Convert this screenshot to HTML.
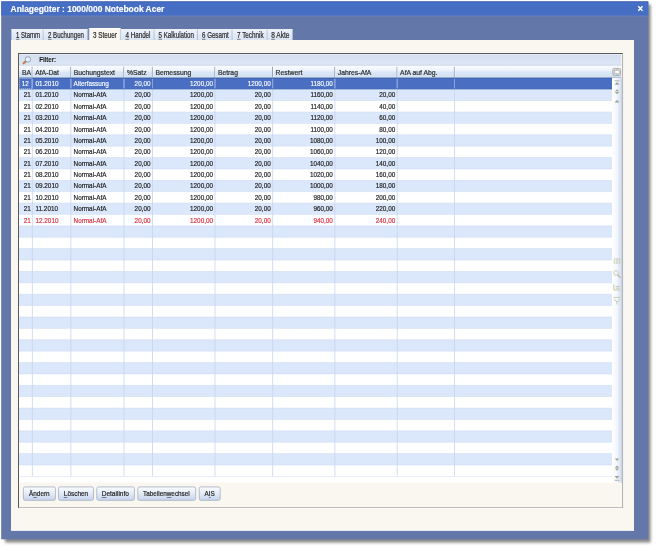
<!DOCTYPE html><html><head><meta charset="utf-8"><style>html,body{margin:0;padding:0;background:#fff;overflow:hidden}svg{display:block;filter:blur(0.3px)}text{font-family:"Liberation Sans",sans-serif}</style></head><body>
<svg width="656" height="548" viewBox="0 0 656 548">
<defs><linearGradient id="gTab" x1="0" y1="0" x2="0" y2="1"><stop offset="0" stop-color="#eef3fa"/><stop offset="1" stop-color="#d9e3f2"/></linearGradient><linearGradient id="gHdr" x1="0" y1="0" x2="0" y2="1"><stop offset="0" stop-color="#fbfdff"/><stop offset="0.38" stop-color="#eef4fc"/><stop offset="0.55" stop-color="#d9e6f7"/><stop offset="1" stop-color="#d2e0f4"/></linearGradient><linearGradient id="gFil" x1="0" y1="0" x2="0" y2="1"><stop offset="0" stop-color="#d3deef"/><stop offset="1" stop-color="#dce6f6"/></linearGradient><linearGradient id="gNav" x1="0" y1="0" x2="1" y2="0"><stop offset="0" stop-color="#ffffff"/><stop offset="0.5" stop-color="#f3f6fc"/><stop offset="1" stop-color="#cdd9ef"/></linearGradient><linearGradient id="gBtn" x1="0" y1="0" x2="0" y2="1"><stop offset="0" stop-color="#f9fbfe"/><stop offset="0.4" stop-color="#e9eff9"/><stop offset="1" stop-color="#c6d4ee"/></linearGradient><filter id="sh" x="-5%" y="-5%" width="110%" height="110%"><feGaussianBlur stdDeviation="1.8"/></filter></defs>
<rect x="5" y="4.5" width="645.6" height="538" fill="#000" opacity="0.48" filter="url(#sh)"/>
<rect x="1.2" y="1.5" width="647.1" height="537.8" fill="#6377a8"/>
<rect x="1.2" y="1.5" width="647.1" height="14.3" fill="#476ec5"/>
<rect x="1.5" y="15.6" width="646.8" height="0.8" fill="#7a8fc0" opacity="0.6"/>
<rect x="1.5" y="1.5" width="646.8" height="0.9" fill="#3d5fae" opacity="0.7"/>
<text x="0" y="12.00" font-size="8.4" fill="#ffffff" stroke="#ffffff" stroke-width="0.15" font-weight="bold" transform="translate(10.60,0) scale(1.0048,1)">Anlagegüter : 1000/000 Notebook Acer</text>
<path d="M638.3 6.3 L642.5 10.8 M642.5 6.3 L638.3 10.8" stroke="#fff" stroke-width="1.4"/>
<rect x="11" y="40" width="622.8" height="490.6" fill="#f9f7f0"/>
<rect x="633" y="40" width="0.8" height="490.6" fill="#ffffff"/>
<rect x="11" y="529.8" width="622.8" height="0.8" fill="#ffffff"/>
<rect x="11.4" y="29.2" width="32.0" height="10.8" fill="url(#gTab)"/>
<rect x="11.4" y="29.2" width="32.0" height="0.8" fill="#f4f7fb"/>
<rect x="42.699999999999996" y="29.6" width="0.7" height="10.4" fill="#b0bcd0"/>
<text x="0" y="38.00" font-size="8.4" fill="#2a2a2a" stroke="#2a2a2a" stroke-width="0.2" transform="translate(16.00,0) scale(0.7141,1)">1 Stamm</text>
<rect x="16" y="38.9" width="3.34" height="0.6" fill="#444"/>
<rect x="43.4" y="29.2" width="44.199999999999996" height="10.8" fill="url(#gTab)"/>
<rect x="43.4" y="29.2" width="44.199999999999996" height="0.8" fill="#f4f7fb"/>
<rect x="86.89999999999999" y="29.6" width="0.7" height="10.4" fill="#b0bcd0"/>
<text x="0" y="38.00" font-size="8.4" fill="#2a2a2a" stroke="#2a2a2a" stroke-width="0.2" transform="translate(48.00,0) scale(0.7271,1)">2 Buchungen</text>
<rect x="48" y="38.9" width="3.40" height="0.6" fill="#444"/>
<rect x="88.9" y="28" width="31.69999999999999" height="12.5" fill="#f9f7f0"/>
<rect x="88.9" y="28" width="31.69999999999999" height="0.8" fill="#ffffff"/>
<rect x="88.9" y="28" width="0.7" height="12" fill="#c9d2e2"/>
<rect x="119.89999999999999" y="28" width="0.7" height="12" fill="#c9d2e2"/>
<text x="0" y="37.70" font-size="8.4" fill="#2a2a2a" stroke="#2a2a2a" stroke-width="0.2" transform="translate(93.00,0) scale(0.7558,1)">3 Steuer</text>
<rect x="121" y="29.2" width="33.30000000000001" height="10.8" fill="url(#gTab)"/>
<rect x="121" y="29.2" width="33.30000000000001" height="0.8" fill="#f4f7fb"/>
<rect x="153.60000000000002" y="29.6" width="0.7" height="10.4" fill="#b0bcd0"/>
<text x="0" y="38.00" font-size="8.4" fill="#2a2a2a" stroke="#2a2a2a" stroke-width="0.2" transform="translate(125.50,0) scale(0.7435,1)">4 Handel</text>
<rect x="125.5" y="38.9" width="3.47" height="0.6" fill="#444"/>
<rect x="154.3" y="29.2" width="43.5" height="10.8" fill="url(#gTab)"/>
<rect x="154.3" y="29.2" width="43.5" height="0.8" fill="#f4f7fb"/>
<rect x="197.10000000000002" y="29.6" width="0.7" height="10.4" fill="#b0bcd0"/>
<text x="0" y="38.00" font-size="8.4" fill="#2a2a2a" stroke="#2a2a2a" stroke-width="0.2" transform="translate(158.50,0) scale(0.7381,1)">5 Kalkulation</text>
<rect x="158.5" y="38.9" width="3.45" height="0.6" fill="#444"/>
<rect x="198" y="29.2" width="34.30000000000001" height="10.8" fill="url(#gTab)"/>
<rect x="198" y="29.2" width="34.30000000000001" height="0.8" fill="#f4f7fb"/>
<rect x="231.60000000000002" y="29.6" width="0.7" height="10.4" fill="#b0bcd0"/>
<text x="0" y="38.00" font-size="8.4" fill="#2a2a2a" stroke="#2a2a2a" stroke-width="0.2" transform="translate(202.00,0) scale(0.7360,1)">6 Gesamt</text>
<rect x="202" y="38.9" width="3.44" height="0.6" fill="#444"/>
<rect x="232.3" y="29.2" width="35.099999999999966" height="10.8" fill="url(#gTab)"/>
<rect x="232.3" y="29.2" width="35.099999999999966" height="0.8" fill="#f4f7fb"/>
<rect x="266.7" y="29.6" width="0.7" height="10.4" fill="#b0bcd0"/>
<text x="0" y="38.00" font-size="8.4" fill="#2a2a2a" stroke="#2a2a2a" stroke-width="0.2" transform="translate(237.00,0) scale(0.7528,1)">7 Technik</text>
<rect x="237" y="38.9" width="3.52" height="0.6" fill="#444"/>
<rect x="267.4" y="29.2" width="25.200000000000045" height="10.8" fill="url(#gTab)"/>
<rect x="267.4" y="29.2" width="25.200000000000045" height="0.8" fill="#f4f7fb"/>
<rect x="291.90000000000003" y="29.6" width="0.7" height="10.4" fill="#b0bcd0"/>
<text x="0" y="38.00" font-size="8.4" fill="#2a2a2a" stroke="#2a2a2a" stroke-width="0.2" transform="translate(271.20,0) scale(0.7837,1)">8 Akte</text>
<rect x="271.2" y="38.9" width="3.66" height="0.6" fill="#444"/>
<rect x="18.5" y="53.5" width="604.1" height="454.2" fill="none" stroke="#a9a9a9" stroke-width="0.9"/>
<rect x="19.2" y="508" width="604" height="0.7" fill="#ffffff"/>
<rect x="18.1" y="53.1" width="604.5" height="0.9" fill="#505050"/>
<rect x="18.1" y="53.1" width="0.9" height="454.6" fill="#505050"/>
<rect x="19" y="54" width="602.2" height="11.5" fill="url(#gFil)"/>
<rect x="19" y="54" width="602.2" height="0.8" fill="#e6edf8"/>
<rect x="19" y="64.9" width="602.2" height="0.8" fill="#b9c5da"/>
<circle cx="27.9" cy="59.4" r="2.7" fill="#e4f3fc" stroke="#8a98a8" stroke-width="0.9"/>
<path d="M25.4 61.8 L23.6 63.3" stroke="#c4784e" stroke-width="2.1" stroke-linecap="round"/>
<text x="0" y="61.90" font-size="7.6" fill="#1e1e1e" stroke="#1e1e1e" stroke-width="0.1" font-weight="bold" transform="translate(39.20,0) scale(0.8053,1)">Filter:</text>
<rect x="19" y="65.6" width="602.2" height="12.300000000000011" fill="url(#gHdr)"/>
<rect x="31.700000000000003" y="66.8" width="0.9" height="10.100000000000012" fill="#8f9cb0"/>
<rect x="32.6" y="66.8" width="0.6" height="10.100000000000012" fill="#ffffff" opacity="0.8"/>
<rect x="70.3" y="66.8" width="0.9" height="10.100000000000012" fill="#8f9cb0"/>
<rect x="71.2" y="66.8" width="0.6" height="10.100000000000012" fill="#ffffff" opacity="0.8"/>
<rect x="123.4" y="66.8" width="0.9" height="10.100000000000012" fill="#8f9cb0"/>
<rect x="124.30000000000001" y="66.8" width="0.6" height="10.100000000000012" fill="#ffffff" opacity="0.8"/>
<rect x="151.9" y="66.8" width="0.9" height="10.100000000000012" fill="#8f9cb0"/>
<rect x="152.8" y="66.8" width="0.6" height="10.100000000000012" fill="#ffffff" opacity="0.8"/>
<rect x="214.4" y="66.8" width="0.9" height="10.100000000000012" fill="#8f9cb0"/>
<rect x="215.3" y="66.8" width="0.6" height="10.100000000000012" fill="#ffffff" opacity="0.8"/>
<rect x="272.1" y="66.8" width="0.9" height="10.100000000000012" fill="#8f9cb0"/>
<rect x="273.0" y="66.8" width="0.6" height="10.100000000000012" fill="#ffffff" opacity="0.8"/>
<rect x="334.3" y="66.8" width="0.9" height="10.100000000000012" fill="#8f9cb0"/>
<rect x="335.2" y="66.8" width="0.6" height="10.100000000000012" fill="#ffffff" opacity="0.8"/>
<rect x="396.6" y="66.8" width="0.9" height="10.100000000000012" fill="#8f9cb0"/>
<rect x="397.5" y="66.8" width="0.6" height="10.100000000000012" fill="#ffffff" opacity="0.8"/>
<rect x="453.9" y="66.8" width="0.9" height="10.100000000000012" fill="#8f9cb0"/>
<rect x="454.79999999999995" y="66.8" width="0.6" height="10.100000000000012" fill="#ffffff" opacity="0.8"/>
<rect x="19" y="77.0" width="602.2" height="0.9" fill="#aab6c9"/>
<text x="0" y="74.80" font-size="7.6" fill="#2a2a2a" stroke="#2a2a2a" stroke-width="0.2" transform="translate(21.90,0) scale(0.8947,1)">BA</text>
<text x="0" y="74.80" font-size="7.6" fill="#2a2a2a" stroke="#2a2a2a" stroke-width="0.2" transform="translate(35.20,0) scale(0.8947,1)">AfA-Dat</text>
<text x="0" y="74.80" font-size="7.6" fill="#2a2a2a" stroke="#2a2a2a" stroke-width="0.2" transform="translate(73.80,0) scale(0.8947,1)">Buchungstext</text>
<text x="0" y="74.80" font-size="7.6" fill="#2a2a2a" stroke="#2a2a2a" stroke-width="0.2" transform="translate(126.90,0) scale(0.8947,1)">%Satz</text>
<text x="0" y="74.80" font-size="7.6" fill="#2a2a2a" stroke="#2a2a2a" stroke-width="0.2" transform="translate(155.40,0) scale(0.8947,1)">Bemessung</text>
<text x="0" y="74.80" font-size="7.6" fill="#2a2a2a" stroke="#2a2a2a" stroke-width="0.2" transform="translate(217.90,0) scale(0.8947,1)">Betrag</text>
<text x="0" y="74.80" font-size="7.6" fill="#2a2a2a" stroke="#2a2a2a" stroke-width="0.2" transform="translate(275.60,0) scale(0.8947,1)">Restwert</text>
<text x="0" y="74.80" font-size="7.6" fill="#2a2a2a" stroke="#2a2a2a" stroke-width="0.2" transform="translate(337.80,0) scale(0.8947,1)">Jahres-AfA</text>
<text x="0" y="74.80" font-size="7.6" fill="#2a2a2a" stroke="#2a2a2a" stroke-width="0.2" transform="translate(400.10,0) scale(0.8947,1)">AfA auf Abg.</text>
<rect x="19" y="476" width="593" height="6.5" fill="#ffffff"/>
<rect x="19" y="77.90" width="593" height="11.387" fill="#4a6fc2"/>
<rect x="19" y="89.29" width="593" height="11.387" fill="#dbe7fa"/>
<rect x="19" y="100.67" width="593" height="11.387" fill="#ffffff"/>
<rect x="19" y="112.06" width="593" height="11.387" fill="#dbe7fa"/>
<rect x="19" y="123.45" width="593" height="11.387" fill="#ffffff"/>
<rect x="19" y="134.84" width="593" height="11.387" fill="#dbe7fa"/>
<rect x="19" y="146.22" width="593" height="11.387" fill="#ffffff"/>
<rect x="19" y="157.61" width="593" height="11.387" fill="#dbe7fa"/>
<rect x="19" y="169.00" width="593" height="11.387" fill="#ffffff"/>
<rect x="19" y="180.38" width="593" height="11.387" fill="#dbe7fa"/>
<rect x="19" y="191.77" width="593" height="11.387" fill="#ffffff"/>
<rect x="19" y="203.16" width="593" height="11.387" fill="#dbe7fa"/>
<rect x="19" y="214.54" width="593" height="11.387" fill="#ffffff"/>
<rect x="19" y="225.93" width="593" height="11.387" fill="#dbe7fa"/>
<rect x="19" y="237.32" width="593" height="11.387" fill="#ffffff"/>
<rect x="19" y="248.71" width="593" height="11.387" fill="#dbe7fa"/>
<rect x="19" y="260.09" width="593" height="11.387" fill="#ffffff"/>
<rect x="19" y="271.48" width="593" height="11.387" fill="#dbe7fa"/>
<rect x="19" y="282.87" width="593" height="11.387" fill="#ffffff"/>
<rect x="19" y="294.25" width="593" height="11.387" fill="#dbe7fa"/>
<rect x="19" y="305.64" width="593" height="11.387" fill="#ffffff"/>
<rect x="19" y="317.03" width="593" height="11.387" fill="#dbe7fa"/>
<rect x="19" y="328.41" width="593" height="11.387" fill="#ffffff"/>
<rect x="19" y="339.80" width="593" height="11.387" fill="#dbe7fa"/>
<rect x="19" y="351.19" width="593" height="11.387" fill="#ffffff"/>
<rect x="19" y="362.58" width="593" height="11.387" fill="#dbe7fa"/>
<rect x="19" y="373.96" width="593" height="11.387" fill="#ffffff"/>
<rect x="19" y="385.35" width="593" height="11.387" fill="#dbe7fa"/>
<rect x="19" y="396.74" width="593" height="11.387" fill="#ffffff"/>
<rect x="19" y="408.12" width="593" height="11.387" fill="#dbe7fa"/>
<rect x="19" y="419.51" width="593" height="11.387" fill="#ffffff"/>
<rect x="19" y="430.90" width="593" height="11.387" fill="#dbe7fa"/>
<rect x="19" y="442.28" width="593" height="11.387" fill="#ffffff"/>
<rect x="19" y="453.67" width="593" height="11.387" fill="#dbe7fa"/>
<rect x="19" y="465.06" width="593" height="11.387" fill="#ffffff"/>
<rect x="19" y="88.89" width="593" height="0.7" fill="#c6d6ef" opacity="0.6"/>
<rect x="19" y="100.27" width="593" height="0.7" fill="#c6d6ef" opacity="0.6"/>
<rect x="19" y="111.66" width="593" height="0.7" fill="#c6d6ef" opacity="0.6"/>
<rect x="19" y="123.05" width="593" height="0.7" fill="#c6d6ef" opacity="0.6"/>
<rect x="19" y="134.44" width="593" height="0.7" fill="#c6d6ef" opacity="0.6"/>
<rect x="19" y="145.82" width="593" height="0.7" fill="#c6d6ef" opacity="0.6"/>
<rect x="19" y="157.21" width="593" height="0.7" fill="#c6d6ef" opacity="0.6"/>
<rect x="19" y="168.60" width="593" height="0.7" fill="#c6d6ef" opacity="0.6"/>
<rect x="19" y="179.98" width="593" height="0.7" fill="#c6d6ef" opacity="0.6"/>
<rect x="19" y="191.37" width="593" height="0.7" fill="#c6d6ef" opacity="0.6"/>
<rect x="19" y="202.76" width="593" height="0.7" fill="#c6d6ef" opacity="0.6"/>
<rect x="19" y="214.14" width="593" height="0.7" fill="#c6d6ef" opacity="0.6"/>
<rect x="19" y="225.53" width="593" height="0.7" fill="#c6d6ef" opacity="0.6"/>
<rect x="19" y="236.92" width="593" height="0.7" fill="#c6d6ef" opacity="0.6"/>
<rect x="19" y="248.31" width="593" height="0.7" fill="#c6d6ef" opacity="0.6"/>
<rect x="19" y="259.69" width="593" height="0.7" fill="#c6d6ef" opacity="0.6"/>
<rect x="19" y="271.08" width="593" height="0.7" fill="#c6d6ef" opacity="0.6"/>
<rect x="19" y="282.47" width="593" height="0.7" fill="#c6d6ef" opacity="0.6"/>
<rect x="19" y="293.85" width="593" height="0.7" fill="#c6d6ef" opacity="0.6"/>
<rect x="19" y="305.24" width="593" height="0.7" fill="#c6d6ef" opacity="0.6"/>
<rect x="19" y="316.63" width="593" height="0.7" fill="#c6d6ef" opacity="0.6"/>
<rect x="19" y="328.01" width="593" height="0.7" fill="#c6d6ef" opacity="0.6"/>
<rect x="19" y="339.40" width="593" height="0.7" fill="#c6d6ef" opacity="0.6"/>
<rect x="19" y="350.79" width="593" height="0.7" fill="#c6d6ef" opacity="0.6"/>
<rect x="19" y="362.18" width="593" height="0.7" fill="#c6d6ef" opacity="0.6"/>
<rect x="19" y="373.56" width="593" height="0.7" fill="#c6d6ef" opacity="0.6"/>
<rect x="19" y="384.95" width="593" height="0.7" fill="#c6d6ef" opacity="0.6"/>
<rect x="19" y="396.34" width="593" height="0.7" fill="#c6d6ef" opacity="0.6"/>
<rect x="19" y="407.72" width="593" height="0.7" fill="#c6d6ef" opacity="0.6"/>
<rect x="19" y="419.11" width="593" height="0.7" fill="#c6d6ef" opacity="0.6"/>
<rect x="19" y="430.50" width="593" height="0.7" fill="#c6d6ef" opacity="0.6"/>
<rect x="19" y="441.88" width="593" height="0.7" fill="#c6d6ef" opacity="0.6"/>
<rect x="19" y="453.27" width="593" height="0.7" fill="#c6d6ef" opacity="0.6"/>
<rect x="19" y="464.66" width="593" height="0.7" fill="#c6d6ef" opacity="0.6"/>
<rect x="19" y="476.05" width="593" height="0.7" fill="#c6d6ef" opacity="0.6"/>
<rect x="31.900000000000002" y="77.9" width="0.8" height="398.55" fill="#c6d6ef"/>
<rect x="70.5" y="77.9" width="0.8" height="398.55" fill="#c6d6ef"/>
<rect x="123.60000000000001" y="77.9" width="0.8" height="398.55" fill="#c6d6ef"/>
<rect x="152.1" y="77.9" width="0.8" height="398.55" fill="#c6d6ef"/>
<rect x="214.6" y="77.9" width="0.8" height="398.55" fill="#c6d6ef"/>
<rect x="272.3" y="77.9" width="0.8" height="398.55" fill="#c6d6ef"/>
<rect x="334.5" y="77.9" width="0.8" height="398.55" fill="#c6d6ef"/>
<rect x="396.8" y="77.9" width="0.8" height="398.55" fill="#c6d6ef"/>
<rect x="454.09999999999997" y="77.9" width="0.8" height="398.55" fill="#c6d6ef"/>
<rect x="31.900000000000002" y="77.9" width="0.8" height="11.39" fill="#7d9bd9"/>
<rect x="70.5" y="77.9" width="0.8" height="11.39" fill="#7d9bd9"/>
<rect x="123.60000000000001" y="77.9" width="0.8" height="11.39" fill="#7d9bd9"/>
<rect x="152.1" y="77.9" width="0.8" height="11.39" fill="#7d9bd9"/>
<rect x="214.6" y="77.9" width="0.8" height="11.39" fill="#7d9bd9"/>
<rect x="272.3" y="77.9" width="0.8" height="11.39" fill="#7d9bd9"/>
<rect x="334.5" y="77.9" width="0.8" height="11.39" fill="#7d9bd9"/>
<rect x="396.8" y="77.9" width="0.8" height="11.39" fill="#7d9bd9"/>
<rect x="454.09999999999997" y="77.9" width="0.8" height="11.39" fill="#7d9bd9"/>
<rect x="19" y="77.9" width="593" height="0.9" fill="#3f63b3"/>
<rect x="19" y="88.49" width="593" height="0.8" fill="#3f63b3"/>
<rect x="19.6" y="78.5" width="12.2" height="10.19" fill="none" stroke="#dfe8f8" stroke-width="0.7" stroke-dasharray="1,1"/>
<text x="0" y="86.00" font-size="7.6" fill="#ffffff" stroke="#ffffff" stroke-width="0.15" text-anchor="end" transform="translate(28.80,0) scale(0.8355,1)">12</text>
<text x="0" y="86.00" font-size="7.6" fill="#ffffff" stroke="#ffffff" stroke-width="0.15" transform="translate(35.50,0) scale(0.8355,1)">01.2010</text>
<text x="0" y="86.00" font-size="7.6" fill="#ffffff" stroke="#ffffff" stroke-width="0.15" transform="translate(73.60,0) scale(0.8355,1)">Alterfassung</text>
<text x="0" y="86.00" font-size="7.6" fill="#ffffff" stroke="#ffffff" stroke-width="0.15" text-anchor="end" transform="translate(150.50,0) scale(0.8355,1)">20,00</text>
<text x="0" y="86.00" font-size="7.6" fill="#ffffff" stroke="#ffffff" stroke-width="0.15" text-anchor="end" transform="translate(213.00,0) scale(0.8355,1)">1200,00</text>
<text x="0" y="86.00" font-size="7.6" fill="#ffffff" stroke="#ffffff" stroke-width="0.15" text-anchor="end" transform="translate(270.70,0) scale(0.8355,1)">1200,00</text>
<text x="0" y="86.00" font-size="7.6" fill="#ffffff" stroke="#ffffff" stroke-width="0.15" text-anchor="end" transform="translate(332.90,0) scale(0.8355,1)">1180,00</text>
<text x="0" y="97.39" font-size="7.6" fill="#1e1e1e" stroke="#1e1e1e" stroke-width="0.2" text-anchor="end" transform="translate(30.80,0) scale(0.8355,1)">21</text>
<text x="0" y="97.39" font-size="7.6" fill="#1e1e1e" stroke="#1e1e1e" stroke-width="0.2" transform="translate(35.50,0) scale(0.8355,1)">01.2010</text>
<text x="0" y="97.39" font-size="7.6" fill="#1e1e1e" stroke="#1e1e1e" stroke-width="0.2" transform="translate(73.60,0) scale(0.8355,1)">Normal-AfA</text>
<text x="0" y="97.39" font-size="7.6" fill="#1e1e1e" stroke="#1e1e1e" stroke-width="0.2" text-anchor="end" transform="translate(150.50,0) scale(0.8355,1)">20,00</text>
<text x="0" y="97.39" font-size="7.6" fill="#1e1e1e" stroke="#1e1e1e" stroke-width="0.2" text-anchor="end" transform="translate(213.00,0) scale(0.8355,1)">1200,00</text>
<text x="0" y="97.39" font-size="7.6" fill="#1e1e1e" stroke="#1e1e1e" stroke-width="0.2" text-anchor="end" transform="translate(270.70,0) scale(0.8355,1)">20,00</text>
<text x="0" y="97.39" font-size="7.6" fill="#1e1e1e" stroke="#1e1e1e" stroke-width="0.2" text-anchor="end" transform="translate(332.90,0) scale(0.8355,1)">1160,00</text>
<text x="0" y="97.39" font-size="7.6" fill="#1e1e1e" stroke="#1e1e1e" stroke-width="0.2" text-anchor="end" transform="translate(395.20,0) scale(0.8355,1)">20,00</text>
<text x="0" y="108.77" font-size="7.6" fill="#1e1e1e" stroke="#1e1e1e" stroke-width="0.2" text-anchor="end" transform="translate(30.80,0) scale(0.8355,1)">21</text>
<text x="0" y="108.77" font-size="7.6" fill="#1e1e1e" stroke="#1e1e1e" stroke-width="0.2" transform="translate(35.50,0) scale(0.8355,1)">02.2010</text>
<text x="0" y="108.77" font-size="7.6" fill="#1e1e1e" stroke="#1e1e1e" stroke-width="0.2" transform="translate(73.60,0) scale(0.8355,1)">Normal-AfA</text>
<text x="0" y="108.77" font-size="7.6" fill="#1e1e1e" stroke="#1e1e1e" stroke-width="0.2" text-anchor="end" transform="translate(150.50,0) scale(0.8355,1)">20,00</text>
<text x="0" y="108.77" font-size="7.6" fill="#1e1e1e" stroke="#1e1e1e" stroke-width="0.2" text-anchor="end" transform="translate(213.00,0) scale(0.8355,1)">1200,00</text>
<text x="0" y="108.77" font-size="7.6" fill="#1e1e1e" stroke="#1e1e1e" stroke-width="0.2" text-anchor="end" transform="translate(270.70,0) scale(0.8355,1)">20,00</text>
<text x="0" y="108.77" font-size="7.6" fill="#1e1e1e" stroke="#1e1e1e" stroke-width="0.2" text-anchor="end" transform="translate(332.90,0) scale(0.8355,1)">1140,00</text>
<text x="0" y="108.77" font-size="7.6" fill="#1e1e1e" stroke="#1e1e1e" stroke-width="0.2" text-anchor="end" transform="translate(395.20,0) scale(0.8355,1)">40,00</text>
<text x="0" y="120.16" font-size="7.6" fill="#1e1e1e" stroke="#1e1e1e" stroke-width="0.2" text-anchor="end" transform="translate(30.80,0) scale(0.8355,1)">21</text>
<text x="0" y="120.16" font-size="7.6" fill="#1e1e1e" stroke="#1e1e1e" stroke-width="0.2" transform="translate(35.50,0) scale(0.8355,1)">03.2010</text>
<text x="0" y="120.16" font-size="7.6" fill="#1e1e1e" stroke="#1e1e1e" stroke-width="0.2" transform="translate(73.60,0) scale(0.8355,1)">Normal-AfA</text>
<text x="0" y="120.16" font-size="7.6" fill="#1e1e1e" stroke="#1e1e1e" stroke-width="0.2" text-anchor="end" transform="translate(150.50,0) scale(0.8355,1)">20,00</text>
<text x="0" y="120.16" font-size="7.6" fill="#1e1e1e" stroke="#1e1e1e" stroke-width="0.2" text-anchor="end" transform="translate(213.00,0) scale(0.8355,1)">1200,00</text>
<text x="0" y="120.16" font-size="7.6" fill="#1e1e1e" stroke="#1e1e1e" stroke-width="0.2" text-anchor="end" transform="translate(270.70,0) scale(0.8355,1)">20,00</text>
<text x="0" y="120.16" font-size="7.6" fill="#1e1e1e" stroke="#1e1e1e" stroke-width="0.2" text-anchor="end" transform="translate(332.90,0) scale(0.8355,1)">1120,00</text>
<text x="0" y="120.16" font-size="7.6" fill="#1e1e1e" stroke="#1e1e1e" stroke-width="0.2" text-anchor="end" transform="translate(395.20,0) scale(0.8355,1)">60,00</text>
<text x="0" y="131.55" font-size="7.6" fill="#1e1e1e" stroke="#1e1e1e" stroke-width="0.2" text-anchor="end" transform="translate(30.80,0) scale(0.8355,1)">21</text>
<text x="0" y="131.55" font-size="7.6" fill="#1e1e1e" stroke="#1e1e1e" stroke-width="0.2" transform="translate(35.50,0) scale(0.8355,1)">04.2010</text>
<text x="0" y="131.55" font-size="7.6" fill="#1e1e1e" stroke="#1e1e1e" stroke-width="0.2" transform="translate(73.60,0) scale(0.8355,1)">Normal-AfA</text>
<text x="0" y="131.55" font-size="7.6" fill="#1e1e1e" stroke="#1e1e1e" stroke-width="0.2" text-anchor="end" transform="translate(150.50,0) scale(0.8355,1)">20,00</text>
<text x="0" y="131.55" font-size="7.6" fill="#1e1e1e" stroke="#1e1e1e" stroke-width="0.2" text-anchor="end" transform="translate(213.00,0) scale(0.8355,1)">1200,00</text>
<text x="0" y="131.55" font-size="7.6" fill="#1e1e1e" stroke="#1e1e1e" stroke-width="0.2" text-anchor="end" transform="translate(270.70,0) scale(0.8355,1)">20,00</text>
<text x="0" y="131.55" font-size="7.6" fill="#1e1e1e" stroke="#1e1e1e" stroke-width="0.2" text-anchor="end" transform="translate(332.90,0) scale(0.8355,1)">1100,00</text>
<text x="0" y="131.55" font-size="7.6" fill="#1e1e1e" stroke="#1e1e1e" stroke-width="0.2" text-anchor="end" transform="translate(395.20,0) scale(0.8355,1)">80,00</text>
<text x="0" y="142.94" font-size="7.6" fill="#1e1e1e" stroke="#1e1e1e" stroke-width="0.2" text-anchor="end" transform="translate(30.80,0) scale(0.8355,1)">21</text>
<text x="0" y="142.94" font-size="7.6" fill="#1e1e1e" stroke="#1e1e1e" stroke-width="0.2" transform="translate(35.50,0) scale(0.8355,1)">05.2010</text>
<text x="0" y="142.94" font-size="7.6" fill="#1e1e1e" stroke="#1e1e1e" stroke-width="0.2" transform="translate(73.60,0) scale(0.8355,1)">Normal-AfA</text>
<text x="0" y="142.94" font-size="7.6" fill="#1e1e1e" stroke="#1e1e1e" stroke-width="0.2" text-anchor="end" transform="translate(150.50,0) scale(0.8355,1)">20,00</text>
<text x="0" y="142.94" font-size="7.6" fill="#1e1e1e" stroke="#1e1e1e" stroke-width="0.2" text-anchor="end" transform="translate(213.00,0) scale(0.8355,1)">1200,00</text>
<text x="0" y="142.94" font-size="7.6" fill="#1e1e1e" stroke="#1e1e1e" stroke-width="0.2" text-anchor="end" transform="translate(270.70,0) scale(0.8355,1)">20,00</text>
<text x="0" y="142.94" font-size="7.6" fill="#1e1e1e" stroke="#1e1e1e" stroke-width="0.2" text-anchor="end" transform="translate(332.90,0) scale(0.8355,1)">1080,00</text>
<text x="0" y="142.94" font-size="7.6" fill="#1e1e1e" stroke="#1e1e1e" stroke-width="0.2" text-anchor="end" transform="translate(395.20,0) scale(0.8355,1)">100,00</text>
<text x="0" y="154.32" font-size="7.6" fill="#1e1e1e" stroke="#1e1e1e" stroke-width="0.2" text-anchor="end" transform="translate(30.80,0) scale(0.8355,1)">21</text>
<text x="0" y="154.32" font-size="7.6" fill="#1e1e1e" stroke="#1e1e1e" stroke-width="0.2" transform="translate(35.50,0) scale(0.8355,1)">06.2010</text>
<text x="0" y="154.32" font-size="7.6" fill="#1e1e1e" stroke="#1e1e1e" stroke-width="0.2" transform="translate(73.60,0) scale(0.8355,1)">Normal-AfA</text>
<text x="0" y="154.32" font-size="7.6" fill="#1e1e1e" stroke="#1e1e1e" stroke-width="0.2" text-anchor="end" transform="translate(150.50,0) scale(0.8355,1)">20,00</text>
<text x="0" y="154.32" font-size="7.6" fill="#1e1e1e" stroke="#1e1e1e" stroke-width="0.2" text-anchor="end" transform="translate(213.00,0) scale(0.8355,1)">1200,00</text>
<text x="0" y="154.32" font-size="7.6" fill="#1e1e1e" stroke="#1e1e1e" stroke-width="0.2" text-anchor="end" transform="translate(270.70,0) scale(0.8355,1)">20,00</text>
<text x="0" y="154.32" font-size="7.6" fill="#1e1e1e" stroke="#1e1e1e" stroke-width="0.2" text-anchor="end" transform="translate(332.90,0) scale(0.8355,1)">1060,00</text>
<text x="0" y="154.32" font-size="7.6" fill="#1e1e1e" stroke="#1e1e1e" stroke-width="0.2" text-anchor="end" transform="translate(395.20,0) scale(0.8355,1)">120,00</text>
<text x="0" y="165.71" font-size="7.6" fill="#1e1e1e" stroke="#1e1e1e" stroke-width="0.2" text-anchor="end" transform="translate(30.80,0) scale(0.8355,1)">21</text>
<text x="0" y="165.71" font-size="7.6" fill="#1e1e1e" stroke="#1e1e1e" stroke-width="0.2" transform="translate(35.50,0) scale(0.8355,1)">07.2010</text>
<text x="0" y="165.71" font-size="7.6" fill="#1e1e1e" stroke="#1e1e1e" stroke-width="0.2" transform="translate(73.60,0) scale(0.8355,1)">Normal-AfA</text>
<text x="0" y="165.71" font-size="7.6" fill="#1e1e1e" stroke="#1e1e1e" stroke-width="0.2" text-anchor="end" transform="translate(150.50,0) scale(0.8355,1)">20,00</text>
<text x="0" y="165.71" font-size="7.6" fill="#1e1e1e" stroke="#1e1e1e" stroke-width="0.2" text-anchor="end" transform="translate(213.00,0) scale(0.8355,1)">1200,00</text>
<text x="0" y="165.71" font-size="7.6" fill="#1e1e1e" stroke="#1e1e1e" stroke-width="0.2" text-anchor="end" transform="translate(270.70,0) scale(0.8355,1)">20,00</text>
<text x="0" y="165.71" font-size="7.6" fill="#1e1e1e" stroke="#1e1e1e" stroke-width="0.2" text-anchor="end" transform="translate(332.90,0) scale(0.8355,1)">1040,00</text>
<text x="0" y="165.71" font-size="7.6" fill="#1e1e1e" stroke="#1e1e1e" stroke-width="0.2" text-anchor="end" transform="translate(395.20,0) scale(0.8355,1)">140,00</text>
<text x="0" y="177.10" font-size="7.6" fill="#1e1e1e" stroke="#1e1e1e" stroke-width="0.2" text-anchor="end" transform="translate(30.80,0) scale(0.8355,1)">21</text>
<text x="0" y="177.10" font-size="7.6" fill="#1e1e1e" stroke="#1e1e1e" stroke-width="0.2" transform="translate(35.50,0) scale(0.8355,1)">08.2010</text>
<text x="0" y="177.10" font-size="7.6" fill="#1e1e1e" stroke="#1e1e1e" stroke-width="0.2" transform="translate(73.60,0) scale(0.8355,1)">Normal-AfA</text>
<text x="0" y="177.10" font-size="7.6" fill="#1e1e1e" stroke="#1e1e1e" stroke-width="0.2" text-anchor="end" transform="translate(150.50,0) scale(0.8355,1)">20,00</text>
<text x="0" y="177.10" font-size="7.6" fill="#1e1e1e" stroke="#1e1e1e" stroke-width="0.2" text-anchor="end" transform="translate(213.00,0) scale(0.8355,1)">1200,00</text>
<text x="0" y="177.10" font-size="7.6" fill="#1e1e1e" stroke="#1e1e1e" stroke-width="0.2" text-anchor="end" transform="translate(270.70,0) scale(0.8355,1)">20,00</text>
<text x="0" y="177.10" font-size="7.6" fill="#1e1e1e" stroke="#1e1e1e" stroke-width="0.2" text-anchor="end" transform="translate(332.90,0) scale(0.8355,1)">1020,00</text>
<text x="0" y="177.10" font-size="7.6" fill="#1e1e1e" stroke="#1e1e1e" stroke-width="0.2" text-anchor="end" transform="translate(395.20,0) scale(0.8355,1)">160,00</text>
<text x="0" y="188.48" font-size="7.6" fill="#1e1e1e" stroke="#1e1e1e" stroke-width="0.2" text-anchor="end" transform="translate(30.80,0) scale(0.8355,1)">21</text>
<text x="0" y="188.48" font-size="7.6" fill="#1e1e1e" stroke="#1e1e1e" stroke-width="0.2" transform="translate(35.50,0) scale(0.8355,1)">09.2010</text>
<text x="0" y="188.48" font-size="7.6" fill="#1e1e1e" stroke="#1e1e1e" stroke-width="0.2" transform="translate(73.60,0) scale(0.8355,1)">Normal-AfA</text>
<text x="0" y="188.48" font-size="7.6" fill="#1e1e1e" stroke="#1e1e1e" stroke-width="0.2" text-anchor="end" transform="translate(150.50,0) scale(0.8355,1)">20,00</text>
<text x="0" y="188.48" font-size="7.6" fill="#1e1e1e" stroke="#1e1e1e" stroke-width="0.2" text-anchor="end" transform="translate(213.00,0) scale(0.8355,1)">1200,00</text>
<text x="0" y="188.48" font-size="7.6" fill="#1e1e1e" stroke="#1e1e1e" stroke-width="0.2" text-anchor="end" transform="translate(270.70,0) scale(0.8355,1)">20,00</text>
<text x="0" y="188.48" font-size="7.6" fill="#1e1e1e" stroke="#1e1e1e" stroke-width="0.2" text-anchor="end" transform="translate(332.90,0) scale(0.8355,1)">1000,00</text>
<text x="0" y="188.48" font-size="7.6" fill="#1e1e1e" stroke="#1e1e1e" stroke-width="0.2" text-anchor="end" transform="translate(395.20,0) scale(0.8355,1)">180,00</text>
<text x="0" y="199.87" font-size="7.6" fill="#1e1e1e" stroke="#1e1e1e" stroke-width="0.2" text-anchor="end" transform="translate(30.80,0) scale(0.8355,1)">21</text>
<text x="0" y="199.87" font-size="7.6" fill="#1e1e1e" stroke="#1e1e1e" stroke-width="0.2" transform="translate(35.50,0) scale(0.8355,1)">10.2010</text>
<text x="0" y="199.87" font-size="7.6" fill="#1e1e1e" stroke="#1e1e1e" stroke-width="0.2" transform="translate(73.60,0) scale(0.8355,1)">Normal-AfA</text>
<text x="0" y="199.87" font-size="7.6" fill="#1e1e1e" stroke="#1e1e1e" stroke-width="0.2" text-anchor="end" transform="translate(150.50,0) scale(0.8355,1)">20,00</text>
<text x="0" y="199.87" font-size="7.6" fill="#1e1e1e" stroke="#1e1e1e" stroke-width="0.2" text-anchor="end" transform="translate(213.00,0) scale(0.8355,1)">1200,00</text>
<text x="0" y="199.87" font-size="7.6" fill="#1e1e1e" stroke="#1e1e1e" stroke-width="0.2" text-anchor="end" transform="translate(270.70,0) scale(0.8355,1)">20,00</text>
<text x="0" y="199.87" font-size="7.6" fill="#1e1e1e" stroke="#1e1e1e" stroke-width="0.2" text-anchor="end" transform="translate(332.90,0) scale(0.8355,1)">980,00</text>
<text x="0" y="199.87" font-size="7.6" fill="#1e1e1e" stroke="#1e1e1e" stroke-width="0.2" text-anchor="end" transform="translate(395.20,0) scale(0.8355,1)">200,00</text>
<text x="0" y="211.26" font-size="7.6" fill="#1e1e1e" stroke="#1e1e1e" stroke-width="0.2" text-anchor="end" transform="translate(30.80,0) scale(0.8355,1)">21</text>
<text x="0" y="211.26" font-size="7.6" fill="#1e1e1e" stroke="#1e1e1e" stroke-width="0.2" transform="translate(35.50,0) scale(0.8355,1)">11.2010</text>
<text x="0" y="211.26" font-size="7.6" fill="#1e1e1e" stroke="#1e1e1e" stroke-width="0.2" transform="translate(73.60,0) scale(0.8355,1)">Normal-AfA</text>
<text x="0" y="211.26" font-size="7.6" fill="#1e1e1e" stroke="#1e1e1e" stroke-width="0.2" text-anchor="end" transform="translate(150.50,0) scale(0.8355,1)">20,00</text>
<text x="0" y="211.26" font-size="7.6" fill="#1e1e1e" stroke="#1e1e1e" stroke-width="0.2" text-anchor="end" transform="translate(213.00,0) scale(0.8355,1)">1200,00</text>
<text x="0" y="211.26" font-size="7.6" fill="#1e1e1e" stroke="#1e1e1e" stroke-width="0.2" text-anchor="end" transform="translate(270.70,0) scale(0.8355,1)">20,00</text>
<text x="0" y="211.26" font-size="7.6" fill="#1e1e1e" stroke="#1e1e1e" stroke-width="0.2" text-anchor="end" transform="translate(332.90,0) scale(0.8355,1)">960,00</text>
<text x="0" y="211.26" font-size="7.6" fill="#1e1e1e" stroke="#1e1e1e" stroke-width="0.2" text-anchor="end" transform="translate(395.20,0) scale(0.8355,1)">220,00</text>
<text x="0" y="222.64" font-size="7.6" fill="#d93444" stroke="#d93444" stroke-width="0.2" text-anchor="end" transform="translate(30.80,0) scale(0.8355,1)">21</text>
<text x="0" y="222.64" font-size="7.6" fill="#d93444" stroke="#d93444" stroke-width="0.2" transform="translate(35.50,0) scale(0.8355,1)">12.2010</text>
<text x="0" y="222.64" font-size="7.6" fill="#d93444" stroke="#d93444" stroke-width="0.2" transform="translate(73.60,0) scale(0.8355,1)">Normal-AfA</text>
<text x="0" y="222.64" font-size="7.6" fill="#d93444" stroke="#d93444" stroke-width="0.2" text-anchor="end" transform="translate(150.50,0) scale(0.8355,1)">20,00</text>
<text x="0" y="222.64" font-size="7.6" fill="#d93444" stroke="#d93444" stroke-width="0.2" text-anchor="end" transform="translate(213.00,0) scale(0.8355,1)">1200,00</text>
<text x="0" y="222.64" font-size="7.6" fill="#d93444" stroke="#d93444" stroke-width="0.2" text-anchor="end" transform="translate(270.70,0) scale(0.8355,1)">20,00</text>
<text x="0" y="222.64" font-size="7.6" fill="#d93444" stroke="#d93444" stroke-width="0.2" text-anchor="end" transform="translate(332.90,0) scale(0.8355,1)">940,00</text>
<text x="0" y="222.64" font-size="7.6" fill="#d93444" stroke="#d93444" stroke-width="0.2" text-anchor="end" transform="translate(395.20,0) scale(0.8355,1)">240,00</text>
<rect x="612" y="77.9" width="9.8" height="404.7" fill="url(#gNav)"/>
<rect x="621.4" y="77.9" width="0.7" height="404.7" fill="#c0cde6"/>
<rect x="612.8" y="68.4" width="7.8" height="7.1" rx="1.3" fill="#dcdcdc" stroke="#9c9c9c" stroke-width="0.7"/>
<path d="M614.6 70.4 h2.6 v-1 l3 2.6 l-3 2.6 v-1 h-2.6 z" fill="#ffffff" stroke="#888" stroke-width="0.5"/>
<path d="M614.6 80.8 h4.8" stroke="#9ea68c" stroke-width="0.8"/><path d="M614.6 84.8 L617 82 L619.4 84.8 Z" fill="#9ea68c"/>
<path d="M614.8 91.3 L617 89.2 L619.2 91.3 Z M614.8 92.1 L617 94.2 L619.2 92.1 Z" fill="#9ea68c"/>
<path d="M614.6 102.4 L617 99.8 L619.4 102.4 Z" fill="#9ea68c"/>
<path d="M614.6 258.2 q-1.4 2.8 0 5.6 M619.4 258.2 q1.4 2.8 0 5.6 M616.2 258 v6 M617.8 258 v6" stroke="#c2c6a6" stroke-width="0.8" fill="none"/>
<circle cx="616" cy="273" r="2.3" fill="none" stroke="#c2c6a6" stroke-width="0.8"/><path d="M617.6 274.7 L620.4 277.8" stroke="#aeb294" stroke-width="1.1"/>
<path d="M613.8 284.6 v5.4 h6.6 M615.6 286.4 h4 M615.6 288.2 h4" stroke="#c2c6a6" stroke-width="0.9" fill="none"/>
<path d="M613.6 297.4 h6.8 M614 299.2 L617 302 L620 299.2 M617 301.6 v2.8" stroke="#c2c6a6" stroke-width="0.9" fill="none"/>
<path d="M614.8 458.5 L617 461 L619.2 458.5 Z" fill="#9ea68c"/>
<path d="M614.8 467.8 L617 465.6 L619.2 467.8 Z M614.8 468.6 L617 470.8 L619.2 468.6 Z" fill="#9ea68c"/>
<path d="M614.6 476 L617 478.8 L619.4 476 Z" fill="#9ea68c"/><path d="M614.6 480.3 h4.8" stroke="#9ea68c" stroke-width="0.8"/>
<rect x="23.4" y="486.9" width="31.999999999999996" height="13.4" rx="1.8" fill="url(#gBtn)" stroke="#a3adbf" stroke-width="0.8"/>
<text x="0" y="496.00" font-size="7.6" fill="#1e1e1e" stroke="#1e1e1e" stroke-width="0.2" transform="translate(29.00,0) scale(0.8446,1)">Ändern</text>
<rect x="33.28" y="497.1" width="3.57" height="0.6" fill="#333"/>
<rect x="58.5" y="486.9" width="35.00000000000001" height="13.4" rx="1.8" fill="url(#gBtn)" stroke="#a3adbf" stroke-width="0.8"/>
<text x="0" y="496.00" font-size="7.6" fill="#1e1e1e" stroke="#1e1e1e" stroke-width="0.2" transform="translate(63.80,0) scale(0.8492,1)">Löschen</text>
<rect x="63.80" y="497.1" width="3.59" height="0.6" fill="#333"/>
<rect x="96.80000000000001" y="486.9" width="37.60000000000001" height="13.4" rx="1.8" fill="url(#gBtn)" stroke="#a3adbf" stroke-width="0.8"/>
<text x="0" y="496.00" font-size="7.6" fill="#1e1e1e" stroke="#1e1e1e" stroke-width="0.2" transform="translate(101.70,0) scale(0.8616,1)">Detailinfo</text>
<rect x="101.70" y="497.1" width="4.73" height="0.6" fill="#333"/>
<rect x="137.8" y="486.9" width="57.89999999999999" height="13.4" rx="1.8" fill="url(#gBtn)" stroke="#a3adbf" stroke-width="0.8"/>
<text x="0" y="496.00" font-size="7.6" fill="#1e1e1e" stroke="#1e1e1e" stroke-width="0.2" transform="translate(143.10,0) scale(0.8374,1)">Tabellenwechsel</text>
<rect x="166.81" y="497.1" width="4.60" height="0.6" fill="#333"/>
<rect x="199.20000000000002" y="486.9" width="20.999999999999982" height="13.4" rx="1.8" fill="url(#gBtn)" stroke="#a3adbf" stroke-width="0.8"/>
<text x="0" y="496.00" font-size="7.6" fill="#1e1e1e" stroke="#1e1e1e" stroke-width="0.2" transform="translate(204.60,0) scale(0.8327,1)">AIS</text>
<rect x="208.82" y="497.1" width="1.76" height="0.6" fill="#333"/>
</svg></body></html>
